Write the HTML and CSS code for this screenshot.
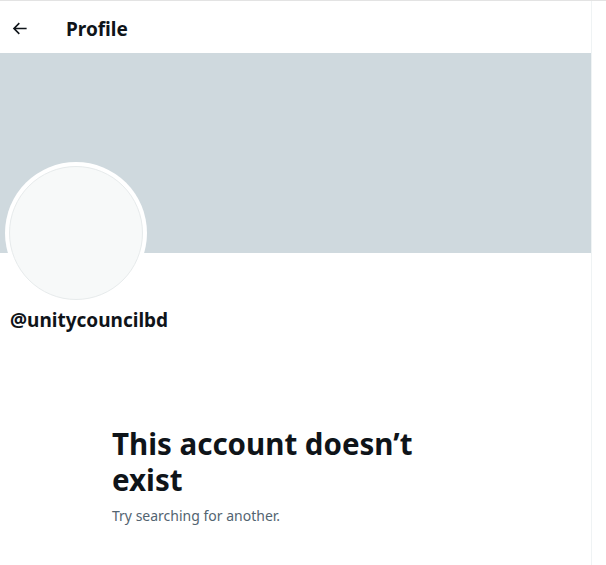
FILE: index.html
```html
<!DOCTYPE html>
<html lang="en">
<head>
<meta charset="utf-8">
<title>Profile</title>
<link rel="stylesheet" href="styles.css">
</head>
<body>
<div class="page">
  <main class="column">
    <header class="topbar">
      <div class="back">
        <svg viewBox="0 0 24 24" width="20" height="20" aria-hidden="true"><path d="M7.414 13l5.043 5.04-1.414 1.42L3.586 12l7.457-7.46 1.414 1.42L7.414 11H21v2H7.414z"/></svg>
      </div>
      <h2 class="title">Profile</h2>
    </header>
    <div class="banner"></div>
    <div class="info">
      <div class="avatar-row">
        <div class="avatar"><div class="avatar-inner"></div></div>
      </div>
      <div class="handle">@unitycouncilbd</div>
    </div>
    <section class="empty">
      <div class="empty-box">
        <h1 class="empty-title">This account doesn’t exist</h1>
        <p class="empty-sub">Try searching for another.</p>
      </div>
    </section>
  </main>
  <aside class="side"></aside>
</div>
</body>
</html>
```
FILE: styles.css
```css
* { box-sizing: border-box; }
html, body { margin: 0; padding: 0; background: #fff; }
body {
  font-family: "Noto Sans", "Open Sans", sans-serif;
  color: #0f1419;
}
.page {
  display: flex;
  border-top: 1px solid #e3e3e3;
  min-height: 565px;
}
.column {
  width: 592px;
  border-right: 1px solid #eff3f4;
  min-height: 564px;
}
.side { flex: 1; }
.topbar {
  height: 52px;
  display: flex;
  align-items: center;
  padding: 0 10px;
}
.back {
  width: 36px;
  height: 34px;
  display: flex;
  align-items: center;
  margin-top: 3px;
}
.back svg { fill: #0f1419; width: 19px; height: 19px; }
.title {
  margin: 4px 0 0 20px;
  font-size: 19px;
  font-weight: 700;
  line-height: 24px;
}
.banner {
  height: 200px;
  background: #cfd9de;
}
.info {
  padding: 0 10px;
}
.avatar-row {
  margin-top: -91px;
  margin-left: -5px;
  height: 142px;
}
.avatar {
  width: 142px;
  height: 142px;
  border-radius: 50%;
  background: #fff;
  padding: 4px;
}
.avatar-inner {
  width: 100%;
  height: 100%;
  border-radius: 50%;
  background: #f7f9f9;
  border: 1px solid #e7ebec;
}
.handle {
  margin-top: 4px;
  font-size: 19px;
  font-weight: 700;
  line-height: 24px;
}
.empty {
  display: flex;
  justify-content: center;
  padding-top: 94px;
}
.empty-box {
  width: 367px;
}
.empty-title {
  margin: 0;
  font-size: 29.5px;
  line-height: 36px;
  font-weight: 700;
}
.empty-sub {
  margin: 8px 0 0;
  font-size: 14px;
  line-height: 20px;
  color: #536471;
}
```
